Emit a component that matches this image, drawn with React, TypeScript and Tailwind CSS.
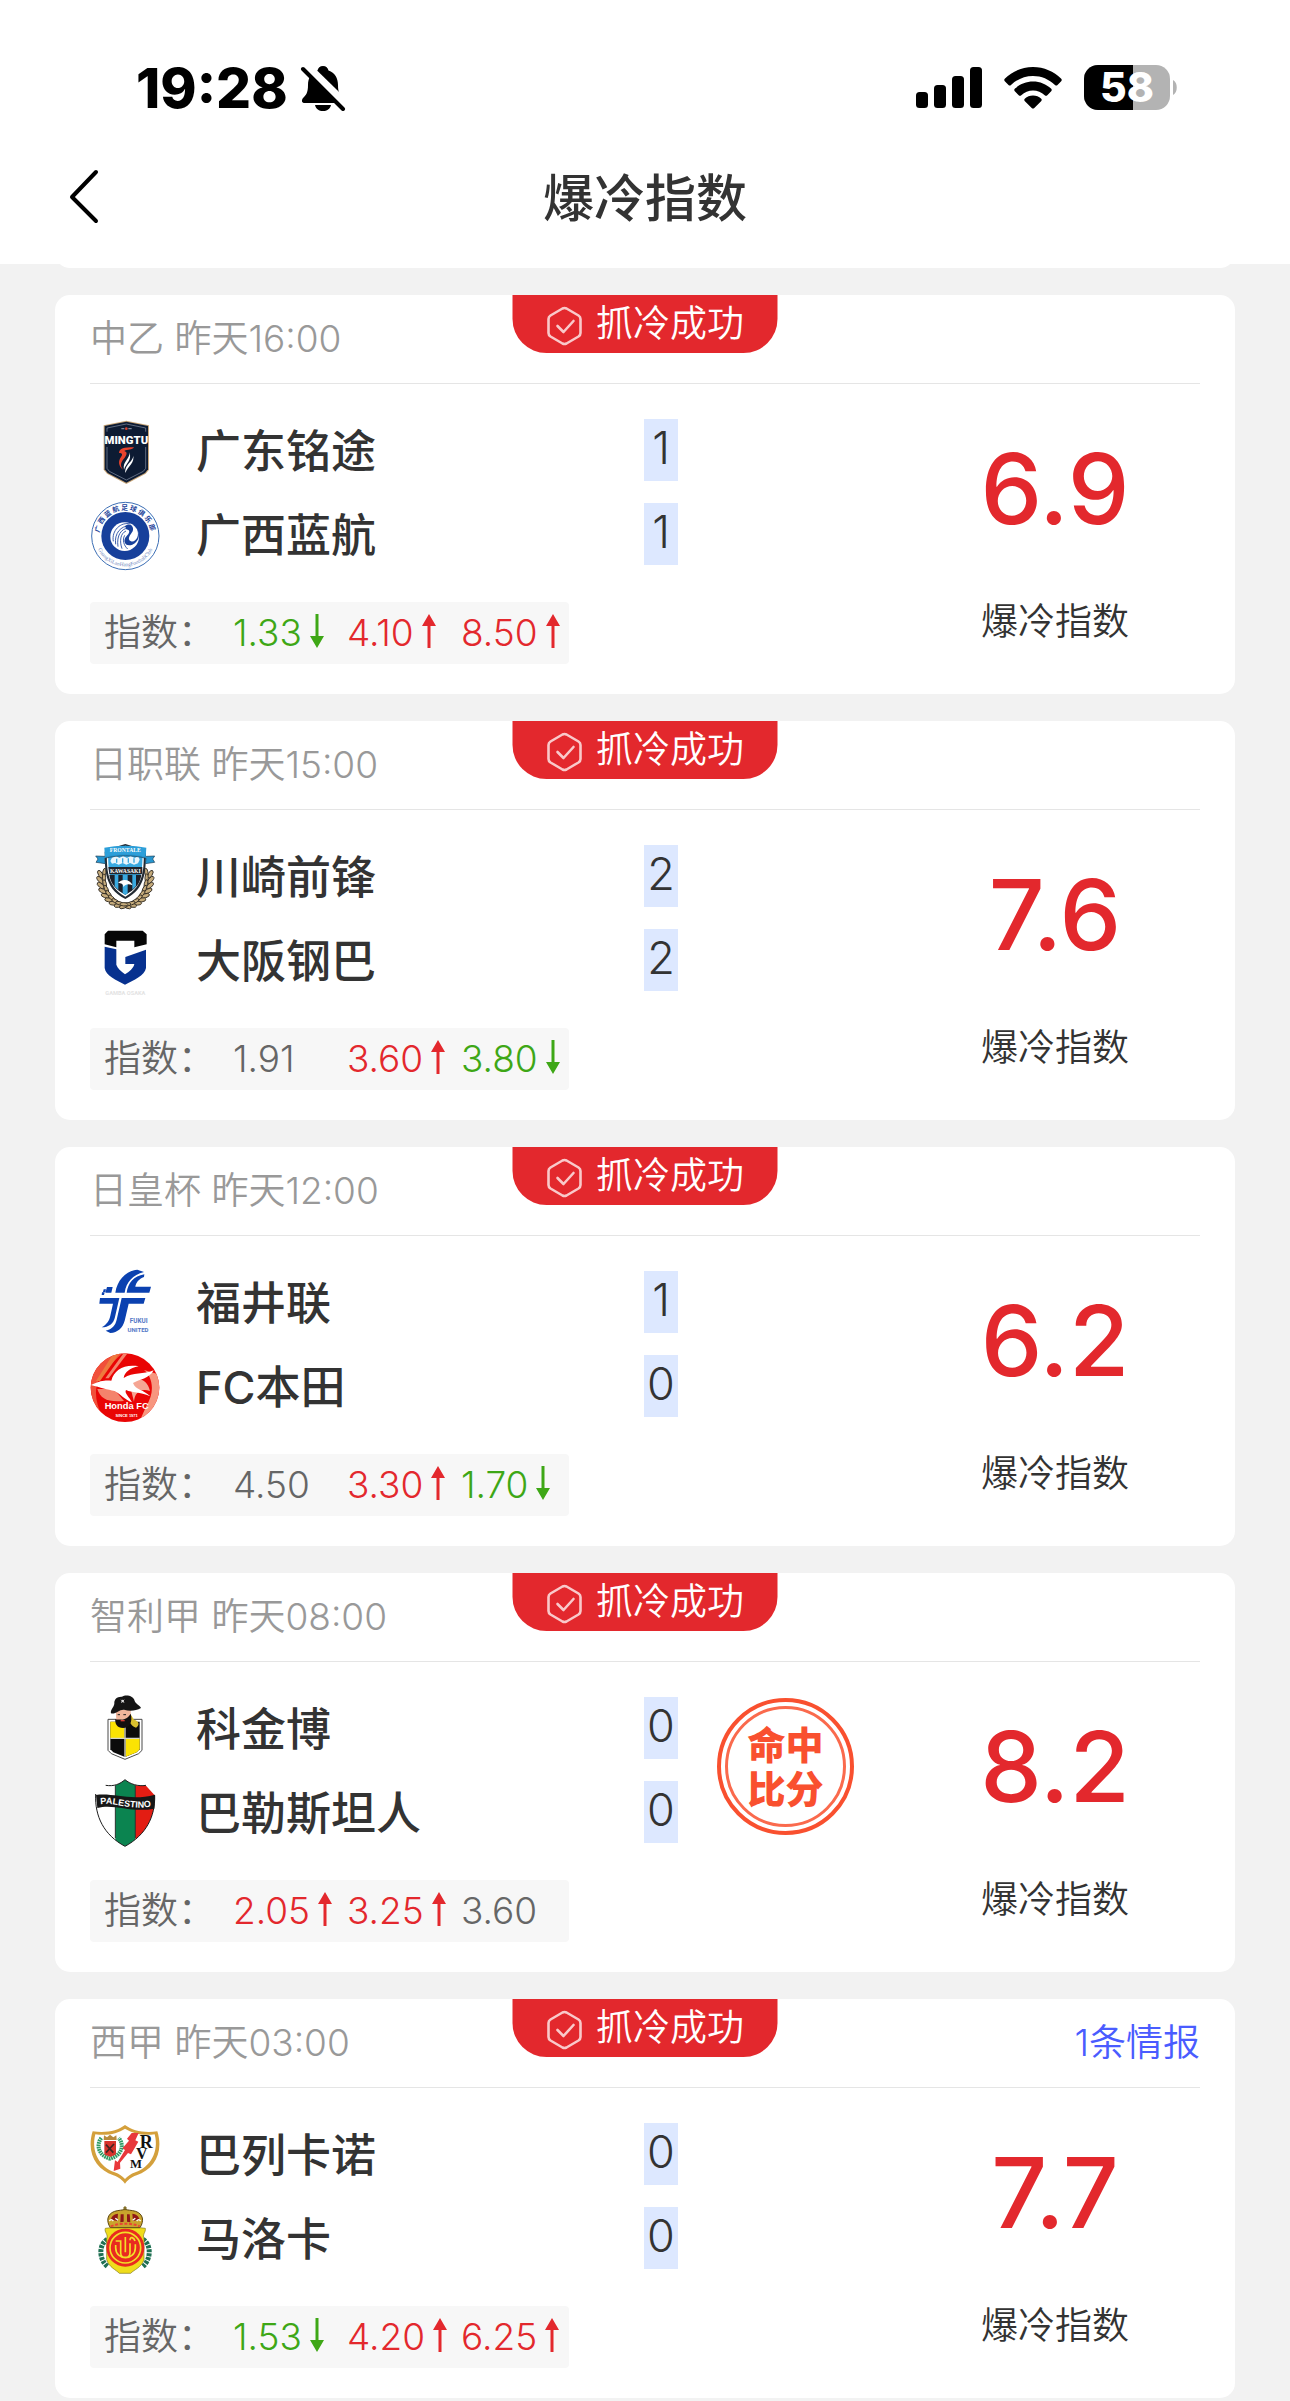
import type { ReactNode } from "react";

type Trend = "up" | "down" | "flat";
type Odd = { value: string; trend: Trend };
type Team = { name: string; score: number; logo: ReactNode };
type Match = {
  league: string;
  time: string;
  teams: [Team, Team];
  odds: Odd[];
  index: string;
  exact?: boolean;
  news?: string;
};

const trendColor: Record<Trend, string> = {
  up: "text-[#e3282d]",
  down: "text-[#3ea716]",
  flat: "text-[#666666]",
};

function Crest({ box, label, children }: { box: string; label: string; children: ReactNode }) {
  return (
    <svg viewBox={box} role="img" aria-label={label} className="size-[70px] shrink-0">
      {children}
    </svg>
  );
}

function Mingtu() {
  return (
    <Crest box="28 54 210 210" label="广东铭途">
      <path d="M137 65 L205 79 V212 L195 224 L137 255 L79 224 L69 212 V79 Z" fill="#c9a678" />
      <path d="M137 68 L202 81 V211 L193 222 L137 251 L81 222 L72 211 V81 Z" fill="#0d1b33" />
      <path d="M79 144 V208 L86 217 L137 243 L188 217 L195 208 V144" fill="none" stroke="#8693a8" strokeWidth="2" />
      <path d="M79 98 V87 L137 75 L195 87 V98" fill="none" stroke="#8693a8" strokeWidth="2" />
      <circle cx="137" cy="89" r="4" fill="#d8402f" />
      <path d="M122 89 h9 M143 89 h10" stroke="#7c8798" strokeWidth="4" />
      <text x="137" y="134" textAnchor="middle" fontSize="34" className="font-['Roboto'] font-black" fill="#fff">
        MINGTU
      </text>
      <path d="M115 162 C116 148 130 145 160 145 C154 154 141 150 131 156 C145 160 134 174 126 184 C118 196 121 204 127 212 C113 201 112 186 121 174 C126 167 126 162 115 162 Z" fill="#e8432d" />
      <path d="M146 160 C150 178 124 188 130 212 C136 192 155 184 146 160 Z M157 166 C162 188 133 192 134 222 C142 200 164 194 157 166 Z" fill="#fff" />
    </Crest>
  );
}

function Lanhang() {
  return (
    <Crest box="28 303 210 210" label="广西蓝航">
      <defs>
        <path id="lh-top" d="M56 408 A78 78 0 0 1 212 408" />
        <path id="lh-bottom" d="M43 408 A91 91 0 0 0 225 408" />
      </defs>
      <circle cx="134" cy="408" r="101" fill="#fff" stroke="#3d6fb5" strokeWidth="3" />
      <circle cx="134" cy="408" r="72" fill="#17409b" />
      <text fontSize="20" fill="#1b429a" className="font-['Noto_Sans_CJK_SC'] font-bold tracking-[5px]">
        <textPath href="#lh-top" startOffset="50%" textAnchor="middle">广西蓝航足球俱乐部</textPath>
      </text>
      <text fontSize="16" fill="#6d86bd" className="font-['Liberation_Serif']">
        <textPath href="#lh-bottom" startOffset="50%" textAnchor="middle">GuangXiLanHangFootballClub</textPath>
      </text>
      <circle cx="132" cy="410" r="43" fill="#fff" />
      <path d="M137 388 C152 390 145 402 138 408 C124 422 133 442 155 434 C178 424 179 400 168 385 C179 408 165 428 151 424 C137 418 150 404 156 394 C162 376 145 367 133 378" fill="#17409b" />
      <path d="M150 372 C120 364 92 392 98 424 M148 378 C121 376 100 400 105 433 M143 384 C122 386 107 406 112 440 M136 393 C119 400 116 424 124 446 M132 406 C124 420 130 437 141 447" fill="none" stroke="#17409b" strokeWidth="2.5" />
    </Crest>
  );
}

const leaves = [0, 1, 2, 3, 4, 5, 6, 7, 8];

function Kawasaki() {
  return (
    <Crest box="28 42 210 210" label="川崎前锋">
      {leaves.map((i) => {
        const a = (-10 + i * 12) * (Math.PI / 180);
        const dx = Math.cos(a) * 76;
        const y = 150 + Math.sin(a) * 82;
        return (
          <g key={i} fill="#c5ab7b" stroke="#2b2620" strokeWidth="2.5">
            <ellipse cx={134 + dx} cy={y} rx="13" ry="6" transform={`rotate(${-60 + i * 10} ${134 + dx} ${y})`} />
            <ellipse cx={134 - dx} cy={y} rx="13" ry="6" transform={`rotate(${60 - i * 10} ${134 - dx} ${y})`} />
            <ellipse cx={134 + dx * 0.84} cy={y - 6} rx="12" ry="5" transform={`rotate(${-100 + i * 12} ${134 + dx * 0.84} ${y - 6})`} />
            <ellipse cx={134 - dx * 0.84} cy={y - 6} rx="12" ry="5" transform={`rotate(${100 - i * 12} ${134 - dx * 0.84} ${y - 6})`} />
          </g>
        );
      })}
      <path d="M134 45 L164 54 L196 68 C194 110 202 176 134 210 C66 176 74 110 72 68 L104 54 Z" fill="#222a33" />
      <path d="M134 50 L190 72 C188 115 193 170 134 203 C75 170 80 115 78 72 Z" fill="#fff" />
      <path d="M134 54 L186 75 C184 115 188 166 134 197 C80 166 84 115 82 75 Z" fill="#39a9e0" />
      <path d="M86 138 H182 C178 165 162 183 134 197 C106 183 90 165 86 138 Z" fill="#1b1f29" />
      <path d="M102 138 h11 v45 l-11 -11 Z M126 138 h15 v55 l-7 4 -8 -4 Z M155 138 h11 v33 l-11 11 Z" fill="#39a9e0" />
      <path d="M83 114 H185 V136 H86 Z" fill="#20242c" />
      <path d="M94 86 l12 -6 10 7 11 -6 12 6 11 -6 12 6 11 -5 4 10 -5 11 -12 4 -12 -5 -11 5 -11 -5 -12 5 -11 -5 -9 2 -5 -8 Z" fill="#eaf6fc" />
      <path d="M108 89 v12 M126 88 v13 M143 88 v13 M160 88 v13" stroke="#39a9e0" strokeWidth="4" />
      <text x="134" y="131" textAnchor="middle" fontSize="17" fill="#fff" className="font-['Liberation_Serif'] font-bold">KAWASAKI</text>
      <path d="M45 81 L71 82 C110 68 158 68 197 82 L222 81 L216 90 L222 100 L194 104 L196 88 C158 78 112 78 72 88 L74 104 L46 100 L52 90 Z" fill="#2595cf" stroke="#1b3d55" strokeWidth="2" />
      <path d="M71 56 C110 48 158 48 197 56 L195 84 C158 73 110 73 73 84 Z" fill="#2d9fd9" />
      <text x="134" y="70" textAnchor="middle" fontSize="17" fill="#fff" className="font-['Liberation_Serif'] font-bold">FRONTALE</text>
      <path d="M112 162 C124 148 148 151 156 169 C143 163 135 165 128 174 C128 164 121 162 112 162 Z" fill="#fff" />
    </Crest>
  );
}

function Gamba() {
  return (
    <Crest box="28 291 210 210" label="大阪钢巴">
      <path d="M72 350 L107 358 V404 C110 414 121 424 133 433 C146 425 159 414 161 402 H134 V381 L196 359 V414 C192 437 159 451 133 464 C107 451 75 437 72 414 Z" fill="#07318f" />
      <path d="M72 313 L82 302 H186 L198 313 V343 L161 352 V332 H107 V352 L72 343 Z" fill="#060606" />
      <text x="134" y="494" textAnchor="middle" fontSize="17" fill="#e3e3e3" className="font-['Roboto'] font-bold">GAMBA OSAKA</text>
    </Crest>
  );
}

function Fukui() {
  return (
    <Crest box="28 45 210 210" label="福井联">
      <g fill="#0b41b0">
        <path d="M104 116 C110 78 135 51 170 47 L190 54 C156 63 137 84 132 116 Z" />
        <path d="M138 116 C142 88 159 66 191 61 L190 69 C174 75 166 86 164 98 H211 L206 116 Z" />
        <path d="M79 99 h17 l-4 17 H74 Z M69 106 h7 l-2 8 h-7 Z M64 115 h8 l-2 8 h-7 Z" />
        <path d="M58 132 H116 L103 189 C99 209 84 220 63 220 C79 210 86 200 89 185 L97 149 H56 Z" />
        <path d="M123 132 H194 L189 149 H144 L132 200 C126 222 111 235 89 237 L75 230 C95 225 104 214 108 197 Z" />
      </g>
      <text x="174" y="208" textAnchor="middle" fontSize="19" fill="#5377c6" className="font-['Roboto'] font-bold">FUKUI</text>
      <text x="172" y="235" textAnchor="middle" fontSize="18" fill="#5377c6" className="font-['Roboto'] font-bold">UNITED</text>
    </Crest>
  );
}

function Honda() {
  return (
    <Crest box="28 294 210 210" label="FC本田">
      <clipPath id="honda-clip">
        <circle cx="133" cy="398" r="103" />
      </clipPath>
      <g clipPath="url(#honda-clip)">
        <rect x="28" y="293" width="210" height="210" fill="#e90505" />
        <path d="M30 293 H128 C95 320 70 350 50 385 C40 420 50 450 62 480 L28 500 Z" fill="#f0503a" />
        <path d="M100 293 H118 L58 378 H46 Z" fill="#ee7a3e" />
        <path d="M130 293 H142 L84 370 H74 Z" fill="#f4836c" />
        <path d="M190 345 C215 365 225 410 196 455 L176 500 H215 L240 440 V360 Z" fill="#f7967f" />
        <path d="M146 385 C165 362 200 370 208 408 C180 398 162 412 160 440 Z" fill="#f5a593" />
        <path d="M50 402 C60 432 80 442 130 438 L100 402 Z" fill="#f4836c" />
        <path d="M31 390 C62 376 72 376 92 377 C100 345 130 327 174 334 C146 340 132 352 129 369 C158 350 188 360 219 346 C205 372 177 373 157 384 C166 406 186 402 209 424 C176 410 155 414 136 405 C130 414 146 426 154 442 C132 434 118 416 102 408 C80 404 60 398 31 390 Z" fill="#fff" />
        <text x="138" y="461" textAnchor="middle" fontSize="28" fill="#fff" className="font-['Liberation_Sans'] font-bold">Honda FC</text>
        <text x="138" y="486" textAnchor="middle" fontSize="12" fill="#fff" className="font-['Liberation_Sans'] font-bold">SINCE 1971</text>
      </g>
    </Crest>
  );
}

function Coquimbo() {
  return (
    <Crest box="28 48 210 210" label="科金博">
      <path d="M82 121 H184 V214 L174 224 L133 241 L92 224 L82 214 Z" fill="#fff" stroke="#4a4a4a" strokeWidth="3" />
      <path d="M89 128 H177 V211 L168 220 L133 234 L98 220 L89 211 Z" fill="#0b0b0b" />
      <path d="M89 128 H131 V177 H89 Z M135 180 H177 V211 L168 220 L135 233 Z" fill="#fbe303" />
      <path d="M133 128 V234 M89 178 H177" stroke="#d5d5c8" strokeWidth="4" />
      <path d="M146 100 L160 122 C176 126 178 138 166 146 C156 144 152 136 146 130 Z" fill="#d9bf2e" />
      <path d="M105 92 H150 V122 C144 140 112 142 107 122 Z" fill="#f0b59b" />
      <path d="M104 120 C110 124 116 120 124 122 C132 120 142 118 150 104 C157 130 146 147 127 147 C110 147 102 134 104 120 Z" fill="#120f0f" />
      <path d="M111 107 h7 M128 107 h8" stroke="#222" strokeWidth="3" />
      <path d="M120 125 h12" stroke="#d33d35" strokeWidth="4" />
      <path d="M91 103 C88 93 99 86 101 74 C100 62 108 52 124 53 C136 45 160 51 162 66 C166 76 178 79 181 87 C166 95 148 98 130 92 C115 91 104 107 91 103 Z" fill="#151515" />
      <path d="M121 62 l10 10 M131 62 l-10 10" stroke="#aaa" strokeWidth="2.5" />
      <circle cx="126" cy="66" r="4" fill="#ddd" />
    </Crest>
  );
}

function Palestino() {
  return (
    <Crest box="28 297 210 210" label="巴勒斯坦人">
      <clipPath id="pal-clip">
        <path d="M75 317 C100 320 118 312 133 299 C148 312 172 320 196 317 L222 346 C224 410 196 465 133 499 C70 465 42 410 45 342 Z" />
      </clipPath>
      <g clipPath="url(#pal-clip)">
        <rect x="40" y="298" width="64" height="202" fill="#fff" />
        <rect x="104" y="298" width="60" height="202" fill="#0b8450" />
        <rect x="164" y="298" width="62" height="202" fill="#e31d13" />
      </g>
      <path d="M104 316 V474 M164 316 V474" stroke="#1c1c1c" strokeWidth="2.5" />
      <path d="M45 342 C42 410 70 465 133 499 C196 465 224 410 222 346 M75 316 C100 320 118 312 133 299 C148 312 172 320 196 316" fill="none" stroke="#1c1c1c" strokeWidth="3" />
      <path d="M46 345 C100 338 150 364 223 344 L221 386 C150 399 100 370 50 384 Z" fill="#171717" />
      <path id="pal-name" d="M55 374 C100 364 152 394 216 378" fill="none" />
      <text fontSize="27" fill="#fff" className="font-['Liberation_Sans'] font-bold">
        <textPath href="#pal-name" startOffset="50%" textAnchor="middle">PALESTINO</textPath>
      </text>
    </Crest>
  );
}

function Rayo() {
  return (
    <Crest box="28 33 210 210" label="巴列卡诺">
      <path d="M36 64 C78 70 110 62 133 45 C156 62 190 70 230 64 C250 128 220 178 168 196 C150 202 140 212 133 221 C126 212 116 202 98 196 C46 178 16 128 36 64 Z" fill="#d4a03c" />
      <path d="M44 73 C82 78 112 70 133 56 C156 70 186 78 222 73 C236 126 208 172 164 187 C150 192 141 199 133 207 C125 199 116 192 102 187 C58 172 30 126 44 73 Z" fill="#fff" />
      <path d="M62 84 C46 104 52 136 88 146 C124 136 132 104 114 84" fill="none" stroke="#2d9a63" strokeWidth="12" strokeDasharray="5 2" />
      <path d="M71 93 H106 V130 C106 138 94 137 89 141 C84 137 71 138 71 130 Z" fill="#d6332c" />
      <path d="M69 90 L70 76 L79 82 L88 74 L98 82 L107 76 L108 90 Z" fill="#b88a3c" />
      <path d="M76 104 l22 24 M100 102 L76 128" stroke="#442422" strokeWidth="5" />
      <path d="M153 69 H174 L164 91 L173 95 L151 133 L142 129 L118 158 L119 176 L99 183 L103 151 L111 156 L133 120 L125 115 L145 92 L139 86 Z" fill="#e8383b" />
      <g fill="#111" className="font-['Liberation_Serif'] font-bold">
        <text x="177" y="115" fontSize="54">R</text>
        <text x="166" y="148" fontSize="48">V</text>
        <text x="148" y="175" fontSize="38">M</text>
      </g>
    </Crest>
  );
}

function Mallorca() {
  return (
    <Crest box="28 282 210 210" label="马洛卡">
      <path d="M80 385 C54 400 54 444 80 466 M187 385 C212 400 212 444 187 466" fill="none" stroke="#1f7053" strokeWidth="15" strokeDasharray="9 3" />
      <path d="M91 350 H176 L194 352 C196 364 184 370 190 384 V446 C182 470 160 476 150 487 H116 C106 476 86 470 78 446 V384 C84 370 70 364 74 352 Z" fill="#efdc1c" stroke="#82781d" strokeWidth="2" />
      <circle cx="134" cy="410" r="57" fill="#e92a20" />
      <g fill="none" stroke="#f2df27" strokeWidth="5">
        <circle cx="134" cy="410" r="46" />
        <path d="M105 390 H120 V425 C120 444 148 444 148 425 V397 M134 378 V424 M163 390 C160 380 148 374 148 388 M105 402 V410 C105 450 164 450 164 410 V400" />
      </g>
      <path d="M89 350 C76 330 79 309 102 301 C116 297 124 298 133 295 C143 298 150 297 165 301 C188 309 191 330 178 350 Z" fill="#c9a42c" stroke="#5f4814" strokeWidth="3" />
      <path d="M91 326 C92 314 102 309 112 308 L110 330 Z M176 326 C175 314 165 309 155 308 L157 330 Z M120 310 H129 V332 L119 334 Z M139 310 H147 L149 334 L139 332 Z" fill="#8f1717" />
      <path d="M86 330 q6 -8 12 0 M168 330 q6 -8 12 0 M104 322 l8 6 M164 322 l-8 6" fill="none" stroke="#fff" strokeWidth="4" />
      <path d="M90 346 Q134 330 177 346" fill="none" stroke="#e94533" strokeWidth="6" strokeDasharray="9 5" />
      <path d="M133 286 v12 M128 291 h10" stroke="#7a6519" strokeWidth="4" />
    </Crest>
  );
}

const matches: Match[] = [
  {
    league: "中乙",
    time: "昨天16:00",
    teams: [
      { name: "广东铭途", score: 1, logo: <Mingtu /> },
      { name: "广西蓝航", score: 1, logo: <Lanhang /> },
    ],
    odds: [
      { value: "1.33", trend: "down" },
      { value: "4.10", trend: "up" },
      { value: "8.50", trend: "up" },
    ],
    index: "6.9",
  },
  {
    league: "日职联",
    time: "昨天15:00",
    teams: [
      { name: "川崎前锋", score: 2, logo: <Kawasaki /> },
      { name: "大阪钢巴", score: 2, logo: <Gamba /> },
    ],
    odds: [
      { value: "1.91", trend: "flat" },
      { value: "3.60", trend: "up" },
      { value: "3.80", trend: "down" },
    ],
    index: "7.6",
  },
  {
    league: "日皇杯",
    time: "昨天12:00",
    teams: [
      { name: "福井联", score: 1, logo: <Fukui /> },
      { name: "FC本田", score: 0, logo: <Honda /> },
    ],
    odds: [
      { value: "4.50", trend: "flat" },
      { value: "3.30", trend: "up" },
      { value: "1.70", trend: "down" },
    ],
    index: "6.2",
  },
  {
    league: "智利甲",
    time: "昨天08:00",
    teams: [
      { name: "科金博", score: 0, logo: <Coquimbo /> },
      { name: "巴勒斯坦人", score: 0, logo: <Palestino /> },
    ],
    odds: [
      { value: "2.05", trend: "up" },
      { value: "3.25", trend: "up" },
      { value: "3.60", trend: "flat" },
    ],
    index: "8.2",
    exact: true,
  },
  {
    league: "西甲",
    time: "昨天03:00",
    teams: [
      { name: "巴列卡诺", score: 0, logo: <Rayo /> },
      { name: "马洛卡", score: 0, logo: <Mallorca /> },
    ],
    odds: [
      { value: "1.53", trend: "down" },
      { value: "4.20", trend: "up" },
      { value: "6.25", trend: "up" },
    ],
    index: "7.7",
    news: "1条情报",
  },
];

function TrendArrow({ trend }: { trend: Trend }) {
  if (trend === "flat") return null;
  return (
    <svg viewBox="0 0 14 34" aria-hidden="true" className="mb-1 h-[34px] w-[14px] shrink-0" fill="currentColor">
      {trend === "up" ? <path d="M7 0 L14 12 H8.5 V34 H5.5 V12 H0 Z" /> : <path d="M7 34 L14 22 H8.5 V0 H5.5 V22 H0 Z" />}
    </svg>
  );
}

function SuccessBadge() {
  return (
    <div className="absolute top-0 left-1/2 flex h-[58px] w-[265px] -translate-x-1/2 items-center justify-center gap-3.5 rounded-b-[34px] bg-[#e3282d] text-[37px] font-[350] text-white">
      <svg viewBox="0 0 36 40" aria-hidden="true" className="mt-1 h-10 w-9" fill="none" stroke="#f9c9ca" strokeWidth="2.6" strokeLinejoin="round">
        <path d="M16 2.5 Q18 1.5 20 2.5 L32 9.5 Q34 10.8 34 13 V27 Q34 29.2 32 30.5 L20 37.5 Q18 38.5 16 37.5 L4 30.5 Q2 29.2 2 27 V13 Q2 10.8 4 9.5 Z" />
        <path d="M11 20 L17 26 L27 15" strokeLinecap="round" />
      </svg>
      <span className="leading-[60px]">抓冷成功</span>
    </div>
  );
}

function ExactStamp() {
  return (
    <div className="mt-[3px] ml-[39px] size-[137px] rounded-full border-4 border-[#f9502f] p-1">
      <div className="flex size-full flex-col items-center justify-center rounded-full border-3 border-[#fa6a4d] text-[38px] leading-[44px] font-black text-[#f9502f] [font-style:oblique_6deg]">
        <span>命中</span>
        <span>比分</span>
      </div>
    </div>
  );
}

function MatchCard({ match }: { match: Match }) {
  return (
    <article className="relative mx-[55px] rounded-[15px] bg-white px-[35px] pb-[30px]">
      <header className="flex h-[89px] items-center justify-between border-b border-[#e5e5e5] text-[37px] leading-[44px] font-[350] text-[#999999]">
        <span>
          {match.league} {match.time}
        </span>
        {match.news && (
          <a href="#news" className="text-[#4a5cff]">
            {match.news}
          </a>
        )}
      </header>
      <SuccessBadge />
      <div className="flex justify-between pt-[33px]">
        <div>
          <div className="flex">
            <div className="flex w-[588px] flex-col gap-3.5">
              {match.teams.map((team) => (
                <div key={team.name} className="flex h-[70px] items-start">
                  {team.logo}
                  <span className="ml-9 flex-1 text-[45px] leading-[69px] font-medium text-[#333333]">{team.name}</span>
                  <span className="mt-0.5 h-[62px] w-[34px] bg-[#dde8ff] text-center text-[45px] leading-[58px] font-[350] text-[#333333]">{team.score}</span>
                </div>
              ))}
            </div>
            {match.exact && <ExactStamp />}
          </div>
          <div className="mt-[31px] flex h-[62px] w-[479px] items-center rounded bg-[#f7f7f7] pl-3.5 text-[37px] leading-[64px] font-[350] text-[#666666]">
            <span className="w-[129px] shrink-0">指数：</span>
            {match.odds.map((odd) => (
              <span key={odd.value} className={`flex w-[114px] shrink-0 items-center gap-2 ${trendColor[odd.trend]}`}>
                {odd.value}
                <TrendArrow trend={odd.trend} />
              </span>
            ))}
          </div>
        </div>
        <div className="flex w-[290px] flex-col items-center">
          <strong className="text-[98px] leading-[143px] font-medium text-[#e3282d]">{match.index}</strong>
          <span className="mt-10 text-[37px] leading-[44px] font-[350] text-[#333333]">爆冷指数</span>
        </div>
      </div>
    </article>
  );
}

function StatusBar() {
  return (
    <div className="flex h-[132px] items-center justify-between pt-11 pr-[112px] pl-[136px] text-black">
      <div className="flex items-center gap-3">
        <time className="text-[55px] leading-[88px] font-extrabold">19:28</time>
        <svg viewBox="0 0 46 46" role="img" aria-label="静音" className="size-[46px]">
          <path d="M23 1 C26 1 28 3 28.5 5.5 C35 8 38 13 38 20 C38 28 40 30 43 33 C45 36 44 38 41 38 H5 C2 38 1 36 3 33 C6 30 8 28 8 20 C8 13 11 8 17.5 5.5 C18 3 20 1 23 1 Z M15 40 H31 C30 44 27 46 23 46 C19 46 16 44 15 40 Z" />
          <path d="M5 0 L46 40" stroke="#fff" strokeWidth="9" />
          <path d="M3 4 L43 44" stroke="#000" strokeWidth="4" strokeLinecap="round" />
        </svg>
      </div>
      <div className="flex items-center gap-[22px]">
        <svg viewBox="0 0 66 42" role="img" aria-label="信号" className="h-[42px] w-[66px]">
          <rect x="0" y="25" width="12" height="16" rx="3.5" />
          <rect x="18" y="18" width="12" height="23" rx="3.5" />
          <rect x="36" y="9" width="12" height="32" rx="3.5" />
          <rect x="54" y="0" width="12" height="41" rx="3.5" />
        </svg>
        <svg viewBox="0 0 58 42" role="img" aria-label="无线网络" className="h-[42px] w-[58px]">
          <path d="M29 0 C40 0 50 4.5 57 11.5 C58 12.5 58 13.3 57.2 14.2 L53.5 18 C52.7 18.8 51.8 18.8 51 18 C45 12.3 37.5 9 29 9 C20.5 9 13 12.3 7 18 C6.2 18.8 5.3 18.8 4.5 18 L0.8 14.2 C0 13.3 0 12.5 1 11.5 C8 4.5 18 0 29 0 Z" />
          <path d="M29 14.5 C36 14.5 42.3 17.2 47 21.6 C48 22.6 48 23.4 47.2 24.2 L43.3 28.2 C42.5 29 41.6 29 40.7 28.2 C37.5 25.3 33.4 23.5 29 23.5 C24.6 23.5 20.5 25.3 17.3 28.2 C16.4 29 15.5 29 14.7 28.2 L10.8 24.2 C10 23.4 10 22.6 11 21.6 C15.7 17.2 22 14.5 29 14.5 Z" />
          <path d="M29 28.5 C32.2 28.5 35 29.7 37 31.6 C38 32.5 38 33.3 37.1 34.2 L30.3 41 C29.5 41.8 28.5 41.8 27.7 41 L20.9 34.2 C20 33.3 20 32.5 21 31.6 C23 29.7 25.8 28.5 29 28.5 Z" />
        </svg>
        <svg viewBox="0 0 94 46" role="img" aria-label="电量 58%" className="h-[46px] w-[94px]">
          <clipPath id="battery">
            <rect width="86" height="45" rx="14" />
          </clipPath>
          <g clipPath="url(#battery)">
            <rect width="86" height="45" fill="#b3b3b3" />
            <rect width="49" height="45" fill="#000" />
          </g>
          <path d="M89 15 C94 17 94 28 89 30 Z" fill="#b3b3b3" />
          <text x="43" y="37" textAnchor="middle" fontSize="41" fill="#fff" className="font-extrabold">58</text>
        </svg>
      </div>
    </div>
  );
}

export default function App() {
  return (
    <div className="min-h-screen bg-[#f2f2f2] pb-1 font-['Inter','Noto_Sans_CJK_SC',sans-serif]">
      <header className="bg-white pb-0.5">
        <StatusBar />
        <nav className="grid h-[130px] grid-cols-[1fr_auto_1fr] items-center px-[68px]">
          <button type="button" aria-label="返回" className="w-8">
            <svg viewBox="0 0 32 56" className="h-14 w-8" fill="none" stroke="#000" strokeWidth="4" strokeLinejoin="round" strokeLinecap="round">
              <path d="M28 3 L4 28 L28 52" />
            </svg>
          </button>
          <h1 className="pt-1 text-[51px] leading-[60px] font-medium text-[#333333]">爆冷指数</h1>
        </nav>
      </header>
      <main className="flex flex-col gap-[27px]">
        <div className="mx-[55px] flex h-1 items-end overflow-hidden">
          <div className="h-10 w-full shrink-0 rounded-b-[15px] bg-white" />
        </div>
        {matches.map((match) => (
          <MatchCard key={match.league} match={match} />
        ))}
      </main>
    </div>
  );
}
